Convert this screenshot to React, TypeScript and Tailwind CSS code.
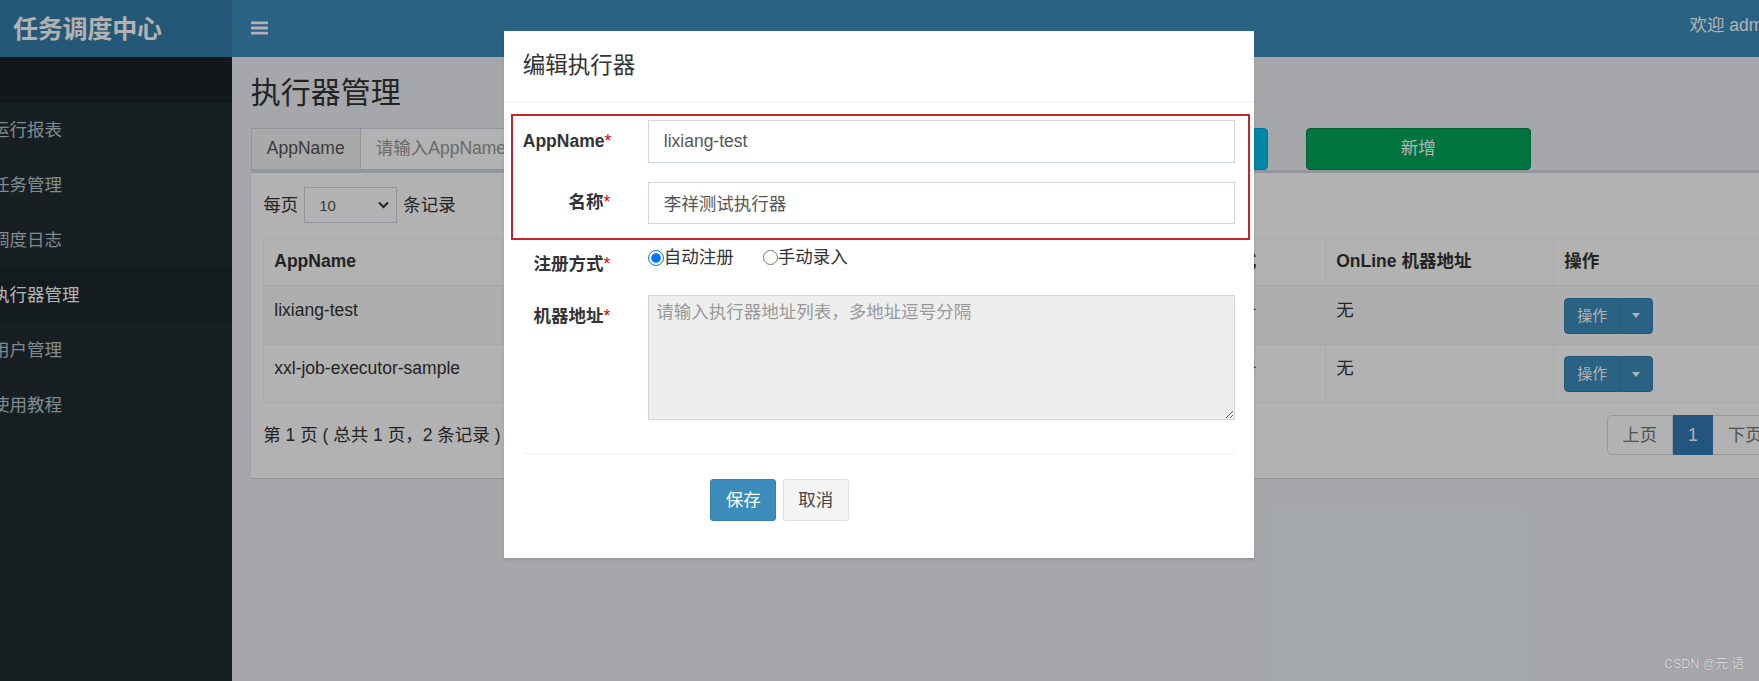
import React from "react";

const menu = ["运行报表", "任务管理", "调度日志", "执行器管理", "用户管理", "使用教程"];

function Caret() {
  return (
    <span className="w-0 h-0 border-l-[4.5px] border-r-[4.5px] border-t-[5px] border-l-transparent border-r-transparent border-t-white" />
  );
}

function ActionBtn() {
  return (
    <div className="inline-flex h-[36px] rounded-[4px] overflow-hidden">
      <span className="w-[56px] flex items-center justify-center bg-[#3c8dbc] border border-[#367fa9] rounded-l-[4px] text-white text-[15px] leading-[22px]">
        操作
      </span>
      <span className="w-[33px] flex items-center justify-center bg-[#3c8dbc] border border-l-0 border-[#367fa9] rounded-r-[4px]">
        <Caret />
      </span>
    </div>
  );
}

function FormRow({ label, children, className }: { label: string; children: React.ReactNode; className?: string }) {
  return (
    <div className={`flex items-start ${className ?? ""}`}>
      <div className="w-[87.5px] shrink-0 text-right font-bold text-[17.5px] leading-[25px] pt-[8.75px] text-[#333] whitespace-nowrap">
        {label}
        <span className="text-[#e00000] font-normal">*</span>
      </div>
      <div className="ml-[37.5px] flex-1 min-w-0">{children}</div>
    </div>
  );
}

export default function App() {
  return (
    <div className="relative w-[1759px] h-[681px] overflow-hidden bg-[#ecf0f5] font-['Liberation_Sans','Noto_Sans_CJK_SC',sans-serif] text-[#333]">
      <div className="flex flex-col w-[1810px] h-full">
        {/* Header */}
        <div className="flex h-[57px] shrink-0">
          <div className="w-[232px] shrink-0 bg-[#367fa9] flex items-center pl-[13px]">
            <span className="text-white font-bold text-[25px] leading-[30px] tracking-[-0.2px]">任务调度中心</span>
          </div>
          <div className="flex-1 bg-[#3c8dbc] flex items-center justify-between pl-[18.75px] pr-[33px]">
            <svg width="17" height="14" viewBox="0 0 17 14" className="mt-[-2px]">
              <rect x="0" y="0.5" width="17" height="2.8" rx="0.6" fill="#ffffff" />
              <rect x="0" y="5.6" width="17" height="2.8" rx="0.6" fill="#ffffff" />
              <rect x="0" y="10.7" width="17" height="2.8" rx="0.6" fill="#ffffff" />
            </svg>
            <span className="text-white text-[17.5px] leading-[25px] mt-[-7px]">欢迎 admin</span>
          </div>
        </div>

        <div className="flex flex-1 min-h-0">
          {/* Sidebar */}
          <aside className="w-[232px] shrink-0 bg-[#222d32] overflow-hidden">
            <div className="h-[46px] bg-[#1a2226]" />
            {menu.map((t) => (
              <div
                key={t}
                className={
                  t === "执行器管理"
                    ? "h-[55px] flex items-center bg-[#1e282c] text-white"
                    : "h-[55px] flex items-center text-[#b8c7ce]"
                }
              >
                <span className="-ml-[8px] text-[17.5px] leading-[25px] whitespace-nowrap">{t}</span>
              </div>
            ))}
          </aside>

          {/* Main content */}
          <main className="flex-1 min-w-0 px-[18.75px] pt-[18.75px]">
            <h1 className="text-[30px] leading-[33px] font-normal text-[#333]">执行器管理</h1>

            {/* Search row */}
            <div className="mt-[18.75px] flex gap-[38px] h-[42px]">
              <div className="w-[357px] flex h-[42px]">
                <span className="w-[110px] shrink-0 flex items-center justify-center bg-[#f3f3f3] border border-[#d2d6de] text-[#555] text-[17.5px]">
                  AppName
                </span>
                <span className="flex-1 flex items-center pl-[15px] bg-white border border-l-0 border-[#d2d6de] text-[#999] text-[17.5px] whitespace-nowrap overflow-hidden">
                  请输入AppName
                </span>
              </div>
              <div className="w-[357px] flex h-[42px]">
                <span className="w-[80px] shrink-0 flex items-center justify-center bg-[#f3f3f3] border border-[#d2d6de] text-[#555] text-[17.5px]">
                  名称
                </span>
                <span className="flex-1 flex items-center pl-[15px] bg-white border border-l-0 border-[#d2d6de] text-[#999] text-[17.5px]">
                  请输入名称
                </span>
              </div>
              <button className="w-[227px] h-[42px] bg-[#00c0ef] border border-[#00acd6] rounded-[4px] text-white text-[17.5px]">
                搜索
              </button>
              <button className="w-[225px] h-[42px] bg-[#00a65a] border border-[#008d4c] rounded-[4px] text-white text-[17.5px]">
                新增
              </button>
            </div>

            {/* Box */}
            <div className="mt-[0.5px] bg-white border-t-[3px] border-[#d2d6de] shadow-[0_1px_1px_rgba(0,0,0,0.1)] px-[12.5px] pt-[14px] pb-[23px]">
              <div className="flex items-center h-[36px] text-[17.5px]">
                <span>每页</span>
                <div className="ml-[6px] w-[93px] h-[36px] border border-[#d2d6de] bg-white flex items-center justify-between pl-[14px] pr-[7px] text-[15px] text-[#555]">
                  <span className="mt-[3px]">10</span>
                  <svg width="11" height="8" viewBox="0 0 11 8">
                    <path d="M1 1.5 L5.5 6 L10 1.5" stroke="#333" strokeWidth="2" fill="none" />
                  </svg>
                </div>
                <span className="ml-[6px]">条记录</span>
              </div>

              <table className="mt-[15px] w-full table-fixed border-collapse border border-[#f4f4f4] text-[17.5px] leading-[25px]">
                <colgroup>
                  <col className="w-[437px]" />
                  <col className="w-[475px]" />
                  <col className="w-[150px]" />
                  <col className="w-[228px]" />
                  <col />
                </colgroup>
                <thead>
                  <tr className="h-[47px] border-b-2 border-[#f4f4f4]">
                    <th className="text-left font-bold px-[10px] border border-[#f4f4f4]">AppName</th>
                    <th className="text-left font-bold px-[10px] border border-[#f4f4f4]">名称</th>
                    <th className="text-left font-bold px-[10px] border border-[#f4f4f4] whitespace-nowrap">注册方式</th>
                    <th className="text-left font-bold px-[10px] border border-[#f4f4f4]">OnLine 机器地址</th>
                    <th className="text-left font-bold px-[10px] border border-[#f4f4f4]">操作</th>
                  </tr>
                </thead>
                <tbody>
                  <tr className="h-[59px] bg-[#f9f9f9]">
                    <td className="align-top px-[10px] pt-[11px] border border-[#f4f4f4]">lixiang-test</td>
                    <td className="align-top px-[10px] pt-[11px] border border-[#f4f4f4]">李祥测试执行器</td>
                    <td className="align-top px-[10px] pt-[11px] border border-[#f4f4f4] whitespace-nowrap">自动注册</td>
                    <td className="align-top px-[10px] pt-[11px] border border-[#f4f4f4]">无</td>
                    <td className="align-top px-[10px] pt-[11px] border border-[#f4f4f4]">
                      <ActionBtn />
                    </td>
                  </tr>
                  <tr className="h-[58px]">
                    <td className="align-top px-[10px] pt-[11px] border border-[#f4f4f4]">xxl-job-executor-sample</td>
                    <td className="align-top px-[10px] pt-[11px] border border-[#f4f4f4]">示例执行器</td>
                    <td className="align-top px-[10px] pt-[11px] border border-[#f4f4f4] whitespace-nowrap">自动注册</td>
                    <td className="align-top px-[10px] pt-[11px] border border-[#f4f4f4]">无</td>
                    <td className="align-top px-[10px] pt-[11px] border border-[#f4f4f4]">
                      <ActionBtn />
                    </td>
                  </tr>
                </tbody>
              </table>

              <div className="mt-[12px] flex items-center justify-between">
                <span className="text-[17.5px] leading-[25px]">第 1 页 ( 总共 1 页，2 条记录 )</span>
                <div className="flex h-[40px] text-[17.5px]">
                  <span className="w-[66px] flex items-center justify-center border border-[#ddd] rounded-l-[5px] text-[#777] bg-white">
                    上页
                  </span>
                  <span className="w-[40px] flex items-center justify-center bg-[#337ab7] border border-[#337ab7] text-white">
                    1
                  </span>
                  <span className="w-[66px] flex items-center justify-center border border-l-0 border-[#ddd] rounded-r-[5px] text-[#777] bg-white">
                    下页
                  </span>
                </div>
              </div>
            </div>
          </main>
        </div>
      </div>

      {/* Backdrop */}
      <div className="absolute inset-0 bg-black/30" />

      {/* Modal */}
      <div className="absolute left-[504px] top-[31px] w-[750px] bg-white shadow-[0_2px_3px_rgba(0,0,0,0.125)]">
        <div className="p-[18.75px] border-b border-[#eeeeee]">
          <h4 className="text-[22.5px] leading-[32px] font-normal text-[#333]">编辑执行器</h4>
        </div>
        <div className="p-[18.75px] pb-[36.5px]">
          <FormRow label="AppName" className="mb-[18.75px]">
            <input
              readOnly
              defaultValue="lixiang-test"
              className="w-full h-[42.5px] border border-[#d2d6de] px-[15px] text-[17.5px] text-[#555] outline-none"
            />
          </FormRow>
          <FormRow label="名称" className="mb-[18.75px]">
            <input
              readOnly
              defaultValue="李祥测试执行器"
              className="w-full h-[42.5px] border border-[#d2d6de] px-[15px] text-[17.5px] text-[#555] outline-none"
            />
          </FormRow>
          <FormRow label="注册方式" className="mb-[18.75px]">
            <div className="flex items-center h-[33.75px] pb-[4px] text-[17.5px] leading-[25px] text-[#333]">
              <label className="flex items-center">
                <input type="radio" name="addressType" defaultChecked className="w-[16px] h-[16px] m-0" />
                <span>自动注册</span>
              </label>
              <label className="flex items-center ml-[29px]">
                <input type="radio" name="addressType" className="w-[15px] h-[15px] m-0" />
                <span>手动录入</span>
              </label>
            </div>
          </FormRow>
          <FormRow label="机器地址">
            <textarea
              readOnly
              placeholder="请输入执行器地址列表，多地址逗号分隔"
              className="block w-full h-[125px] bg-[#eeeeee] border border-[#d2d6de] px-[7.5px] pt-[4px] text-[17.5px] leading-[25px] text-[#555] placeholder:text-[#999] outline-none resize-y"
            />
          </FormRow>
          <div className="mt-[32.5px] border-t border-[#eeeeee]" />
          <div className="mt-[25px] pl-[187.5px] flex gap-[6.5px]">
            <button className="w-[66px] h-[42.5px] bg-[#3c8dbc] border border-[#367fa9] rounded-[3px] text-white text-[17.5px]">
              保存
            </button>
            <button className="w-[66px] h-[42.5px] bg-[#f4f4f4] border border-[#ddd] rounded-[3px] text-[#444] text-[17.5px]">
              取消
            </button>
          </div>
        </div>
        {/* annotation frame */}
        <div className="absolute left-[7px] top-[83px] w-[739px] h-[126px] border-2 border-[#c8232c] pointer-events-none" />
      </div>

      {/* Watermark */}
      <div className="absolute right-[15px] bottom-[9px] text-[12.5px] leading-[15px] text-[#dcdcdc] [text-shadow:0_0_1px_rgba(0,0,0,0.35)]">
        CSDN @元 语
      </div>
    </div>
  );
}
